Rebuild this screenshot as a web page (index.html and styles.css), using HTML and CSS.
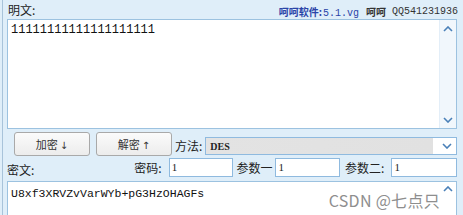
FILE: index.html
```html
<!DOCTYPE html>
<html>
<head>
<meta charset="utf-8">
<link rel="stylesheet" href="styles.css">
</head>
<body>
<div class="win">
  <div class="head">
    <span class="lbl">明文:</span>
    <span class="info"><span class="soft">呵呵软件:<span class="ver">5.1.vg</span></span><span class="hehe">呵呵</span><span class="qq">QQ541231936</span></span>
  </div>
  <div class="area top">
    <div class="text ones">11111111111111111111</div>
    <div class="sb">
      <svg width="10" height="6" viewBox="0 0 10 6"><path d="M1 5 L5 1 L9 5" fill="none" stroke="#4a80b8" stroke-width="1.6"/></svg>
      <svg width="10" height="6" viewBox="0 0 10 6"><path d="M1 1 L5 5 L9 1" fill="none" stroke="#4a80b8" stroke-width="1.6"/></svg>
    </div>
  </div>
  <div class="row btns">
    <button class="btn">加密<span class="arr">↓</span></button>
    <button class="btn">解密<span class="arr">↑</span></button>
    <span class="lbl m">方法:</span>
    <div class="sel"><span class="des">DES</span>
      <svg width="10" height="6" viewBox="0 0 10 6"><path d="M1 1 L5 5 L9 1" fill="none" stroke="#4a80b8" stroke-width="1.6"/></svg>
    </div>
  </div>
  <div class="row params">
    <span class="lbl c">密文:</span>
    <span class="lbl p1">密码:</span>
    <div class="inp w1">1</div>
    <span class="lbl p2">参数一</span>
    <div class="inp w2">1</div>
    <span class="lbl p3">参数二:</span>
    <div class="inp w3">1</div>
  </div>
  <div class="area bottom">
    <div class="text cipher">U8xf3XRVZvVarWYb+pG3HzOHAGFs</div>
    <div class="sb sb2">
      <svg width="10" height="6" viewBox="0 0 10 6"><path d="M1 5 L5 1 L9 5" fill="none" stroke="#4a80b8" stroke-width="1.6"/></svg>
    </div>
    <div class="wm">CSDN @七点只</div>
  </div>
</div>
</body>
</html>
```
FILE: styles.css
```css
html, body { margin: 0; padding: 0; }
body {
  width: 463px; height: 215px; overflow: hidden;
  background: #dfeef9;
  font-family: "Noto Sans CJK SC", "Liberation Sans", sans-serif;
  font-size: 12px; color: #222;
}
.win {
  margin-left: 2px;
  border-left: 1px solid #a8c3da;
  height: 215px;
  padding-left: 3px;
  padding-right: 6px;
  box-sizing: border-box;
  display: flex; flex-direction: column;
  overflow: hidden;
}
.head {
  height: 19px; flex: none;
  display: flex; align-items: center; justify-content: space-between;
  padding-left: 2px;
}
.lbl { line-height: 14px; color: #222; white-space: nowrap; }
.info { display: flex; align-items: center; font-size: 10px; margin-top: 4px; }
.soft { color: #2a44a8; font-weight: bold; }
.ver { font-family: "Liberation Mono", monospace; font-weight: normal; font-size: 10px; margin-left: 1px; }
.hehe { font-weight: bold; margin-left: 7px; color: #333; }
.qq { font-family: "Liberation Mono", monospace; margin-left: 6px; color: #333; margin-right: -1px; }
.area {
  margin-left: 1px;
  background: #fff;
  border: 1px solid #9cc2e0;
  display: flex; position: relative;
  flex: none;
}
.top { height: 108px; }
.text {
  flex: 1;
  font-family: "Liberation Mono", monospace;
  padding: 3px 0 0 3px;
  color: #111;
}
.ones { font-size: 12px; }
.cipher { font-size: 11.5px; padding-top: 5px; }
.sb {
  width: 16px;
  background: #f1f7fc;
  border-left: 1px solid #e3eef8;
  display: flex; flex-direction: column; justify-content: space-between; align-items: center;
  padding: 6px 0 5px;
}
.sb2 { justify-content: flex-start; padding-top: 4px; background: #fff; border-left: none; }
.row { display: flex; flex: none; }
.btns { height: 27px; padding-left: 8px; align-items: flex-start; }
.btn {
  width: 76px; height: 24px;
  margin-right: 6px;
  border: 1px solid #a9a9a9; border-radius: 3px;
  background: linear-gradient(#fbfbfb, #ececec);
  font-family: "Noto Sans CJK SC", sans-serif; font-size: 11px; color: #333;
  padding: 0; margin-top: 3px;
}
.arr { font-family: "DejaVu Sans", sans-serif; font-size: 10px; margin-left: 2px; }
.m { margin-left: -3px; margin-top: 10px; }
.sel {
  flex: 1; height: 16px; margin-left: 3px; margin-top: 8px;
  border: 1px solid #8fbadf;
  background: linear-gradient(90deg, #e3e3e3, #e1e1e1 91%, #fff 91%);
  display: flex; align-items: center; justify-content: space-between;
  padding-right: 4px;
}
.des { font-family: "Liberation Serif", serif; font-weight: bold; font-size: 10px; margin-left: 4px; color: #222; }
.params { height: 25px; align-items: flex-start; }
.params .lbl { margin-top: 5px; }
.params .c { margin-top: 7px; }
.c { margin-left: 1px; }
.p1 { margin-left: 100px; }
.inp {
  height: 17px; border: 1px solid #8fbadf; background: #fff;
  font-family: "Liberation Serif", serif; font-size: 11px; line-height: 17px;
  padding-left: 2px; box-sizing: content-box;
  margin-top: 2px;
}
.w1 { width: 67px; margin-left: 7px; }
.p2 { margin-left: 3px; }
.w2 { width: 67px; margin-left: 3px; }
.p3 { margin-left: 5px; }
.w3 { width: 68px; margin-left: 7px; }
.bottom { height: 40px; }
.wm {
  position: absolute; right: 16px; top: 6px;
  font-family: "Noto Sans CJK SC", sans-serif; font-size: 16px; color: #8e8e8e;
  letter-spacing: 0.3px;
}
```
